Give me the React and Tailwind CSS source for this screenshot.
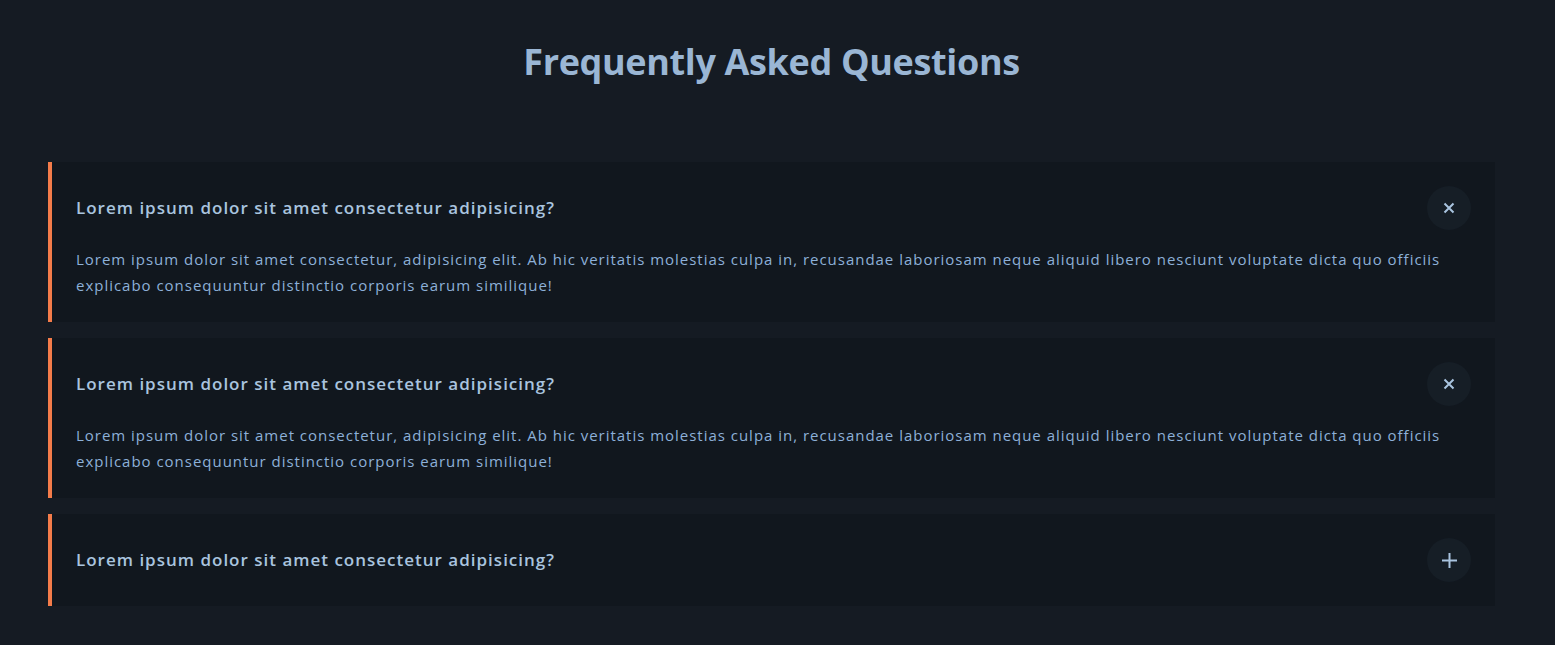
import { useState } from "react";

const faqs = [
  {
    q: "Lorem ipsum dolor sit amet consectetur adipisicing?",
    a: "Lorem ipsum dolor sit amet consectetur, adipisicing elit. Ab hic veritatis molestias culpa in, recusandae laboriosam neque aliquid libero nesciunt voluptate dicta quo officiis explicabo consequuntur distinctio corporis earum similique!",
  },
  {
    q: "Lorem ipsum dolor sit amet consectetur adipisicing?",
    a: "Lorem ipsum dolor sit amet consectetur, adipisicing elit. Ab hic veritatis molestias culpa in, recusandae laboriosam neque aliquid libero nesciunt voluptate dicta quo officiis explicabo consequuntur distinctio corporis earum similique!",
  },
  {
    q: "Lorem ipsum dolor sit amet consectetur adipisicing?",
    a: "Lorem ipsum dolor sit amet consectetur, adipisicing elit. Ab hic veritatis molestias culpa in, recusandae laboriosam neque aliquid libero nesciunt voluptate dicta quo officiis explicabo consequuntur distinctio corporis earum similique!",
  },
];

const FaqItem = ({ item, open, onToggle }) => (
  <div className="bg-[#11171e] border-l-4 border-[#f47c4a] pl-6 pr-6 py-6">
    <div className="flex items-center justify-between">
      <h3 className="text-[17px] font-semibold tracking-[1px] text-[#a9c4df]">{item.q}</h3>
      <button
        onClick={onToggle}
        className="w-11 h-11 rounded-full bg-[#161e26] flex items-center justify-center text-[#a9c4df]"
      >
        {open ? (
          <svg width="12" height="12" viewBox="0 0 12 12" stroke="currentColor" strokeWidth="2">
            <path d="M1.5 1.5l9 9M10.5 1.5l-9 9" />
          </svg>
        ) : (
          <svg width="15" height="15" viewBox="0 0 15 15" stroke="currentColor" strokeWidth="2">
            <path d="M7.5 0v15M0 7.5h15" />
          </svg>
        )}
      </button>
    </div>
    {open && (
      <p className="mt-4 text-[15px] leading-[26px] tracking-[0.98px] text-[#8db0d8]">{item.a}</p>
    )}
  </div>
);

export default function App() {
  const [open, setOpen] = useState([true, true, false]);

  return (
    <div
      className="min-h-[645px] bg-[#151b23] pl-12 pr-[60px] pt-[38px] pb-10"
      style={{ fontFamily: '"Open Sans", "Noto Sans", sans-serif' }}
    >
      <h2 className="text-center text-[36px] font-bold text-[#9ab6d4] tracking-[-0.35px] leading-[48px]">
        Frequently Asked Questions
      </h2>
      <div className="mt-[76px] flex flex-col gap-4">
        {faqs.map((item, i) => (
          <FaqItem
            key={i}
            item={item}
            open={open[i]}
            onToggle={() => setOpen(open.map((o, j) => (j === i ? !o : o)))}
          />
        ))}
      </div>
    </div>
  );
}
